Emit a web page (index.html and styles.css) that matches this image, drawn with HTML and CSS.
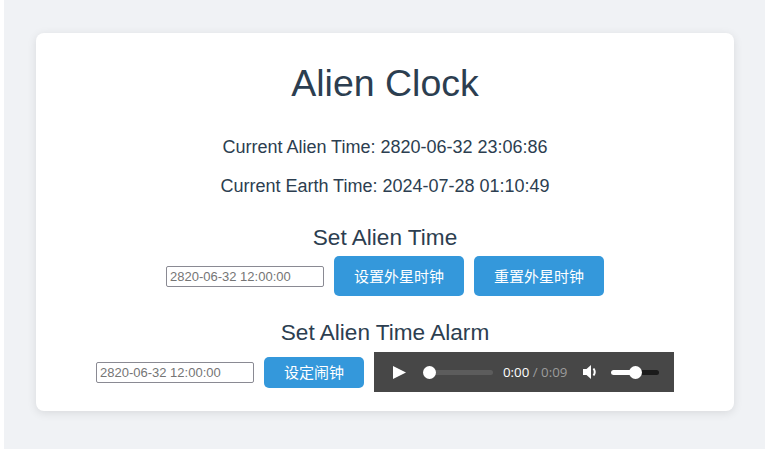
FILE: index.html
```html
<!DOCTYPE html>
<html lang="zh-CN">
<head>
<meta charset="utf-8">
<title>Alien Clock</title>
<link rel="stylesheet" href="styles.css">
</head>
<body>
<div class="card">
  <h1 class="title">Alien Clock</h1>
  <p class="line first">Current Alien Time: 2820-06-32 23:06:86</p>
  <p class="line second">Current Earth Time: 2024-07-28 01:10:49</p>
  <h2 class="sub first-sub">Set Alien Time</h2>
  <div class="row">
    <input class="field" type="text" placeholder="2820-06-32 12:00:00">
    <button class="btn big">设置外星时钟</button>
    <button class="btn big">重置外星时钟</button>
  </div>
  <h2 class="sub second-sub">Set Alien Time Alarm</h2>
  <div class="row">
    <input class="field" type="text" placeholder="2820-06-32 12:00:00">
    <button class="btn small">设定闹钟</button>
    <div class="player">
      <svg class="play" width="13" height="13" viewBox="0 0 13 13"><path d="M0 0 L13 6.5 L0 13 Z" fill="#fff"/></svg>
      <div class="timeline"><span class="knob"></span></div>
      <span class="time"><span class="cur">0:00</span> / 0:09</span>
      <svg class="vol" width="16" height="16" viewBox="0 0 16 16">
        <path d="M0 5 H3.5 L8 1 V15 L3.5 11 H0 Z" fill="#fff"/>
        <path d="M10.5 4.5 Q13 8 10.5 11.5" stroke="#fff" stroke-width="2" fill="none"/>
      </svg>
      <div class="volume"><span class="vfill"></span><span class="vknob"></span></div>
    </div>
  </div>
</div>
</body>
</html>
```
FILE: styles.css
```css
html {
  background: #ffffff;
}
body {
  margin: 0 0 1px 4px;
  height: 449px;
  box-sizing: border-box;
  padding: 33px 31px 0 32px;
  background: #f0f2f5;
  font-family: "Liberation Sans", Arial, sans-serif;
  color: #2c3e50;
}
.card {
  background: #fff;
  border-radius: 8px;
  box-shadow: 0 2px 10px rgba(0, 0, 0, 0.1);
  padding: 28px 0 19px;
  text-align: center;
}
.title {
  margin: 0;
  font-size: 37.5px;
  font-weight: normal;
  line-height: 44px;
}
.line {
  margin: 0;
  font-size: 18px;
  line-height: 22px;
}
.line.first { margin-top: 31px; }
.line.second { margin-top: 17px; }
.sub {
  margin: 0;
  font-size: 22.6px;
  font-weight: normal;
  line-height: 26px;
}
.first-sub { margin-top: 28px; margin-bottom: 5px; }
.second-sub { margin-top: 24px; margin-bottom: 6px; }
.row {
  display: flex;
  justify-content: center;
  align-items: center;
  gap: 10px;
}
.field {
  box-sizing: border-box;
  width: 158px;
  height: 21px;
  margin: 0;
  padding: 1px 3px;
  border: 1px solid #8a8a93;
  border-radius: 2px;
  font-family: "Liberation Sans", Arial, sans-serif;
  font-size: 13px;
  color: #555;
}
.field::placeholder {
  color: #757575;
}
.btn {
  margin: 0;
  border: 0;
  border-radius: 5px;
  background: #3498db;
  color: #fff;
  font-family: "Noto Sans CJK SC", "Liberation Sans", sans-serif;
  font-size: 15px;
  line-height: 20px;
  padding: 0 20px;
}
.btn.big { height: 40px; width: 130px; }
.btn.small { height: 31px; width: 100px; }
.player {
  width: 300px;
  height: 40px;
  background: #474747;
  display: flex;
  align-items: center;
  box-sizing: border-box;
  padding-left: 19px;
}
.play { flex: none; }
.timeline {
  position: relative;
  flex: none;
  margin-left: 17px;
  width: 70px;
  height: 5px;
  border-radius: 3px;
  background: #5c5c5c;
}
.knob {
  position: absolute;
  left: 0;
  top: -4px;
  width: 13px;
  height: 13px;
  border-radius: 50%;
  background: #fff;
}
.time {
  margin-left: 10px;
  font-family: "Open Sans", "Liberation Sans", sans-serif;
  font-size: 13.3px;
  color: #9c9c9c;
  white-space: nowrap;
}
.cur { color: #fff; }
.vol {
  flex: none;
  margin-left: 16px;
}
.volume {
  position: relative;
  flex: none;
  margin-left: 12px;
  width: 48px;
  height: 5px;
  border-radius: 3px;
  background: #1b1b1b;
}
.vfill {
  position: absolute;
  left: 0;
  top: 0;
  width: 24px;
  height: 5px;
  border-radius: 3px;
  background: #fff;
}
.vknob {
  position: absolute;
  left: 18px;
  top: -4px;
  width: 13px;
  height: 13px;
  border-radius: 50%;
  background: #fff;
}
```
